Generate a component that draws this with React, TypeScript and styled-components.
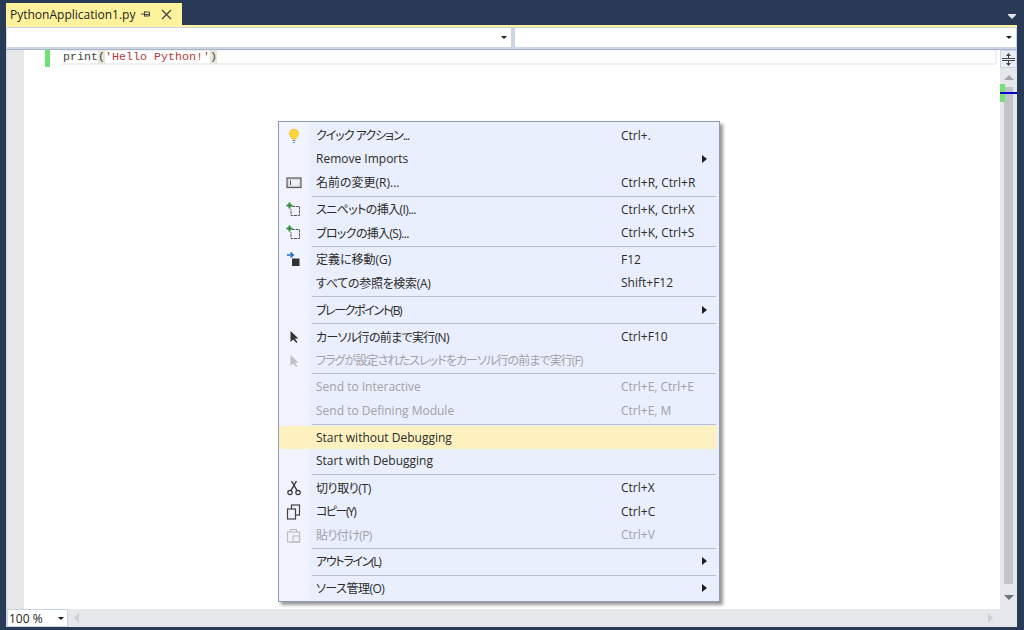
import React from 'react';
import styled, { createGlobalStyle } from 'styled-components';

const GlobalStyle = createGlobalStyle`
  html, body {
    margin: 0;
    padding: 0;
    background: #293a56;
  }
`;

const Window = styled.div`
  position: relative;
  width: 1024px;
  height: 630px;
  overflow: hidden;
  display: flex;
  flex-direction: column;
  background: #293a56;
  font-family: 'Open Sans', 'Noto Sans CJK JP', sans-serif;
`;

const TabStrip = styled.div`
  height: 25px;
  flex: none;
  display: flex;
  align-items: flex-end;
  justify-content: space-between;
  padding: 0 8px 0 6px;
`;

const Tab = styled.div`
  width: 176px;
  height: 22px;
  box-sizing: border-box;
  display: flex;
  align-items: center;
  padding-left: 4px;
  background: #fff29d;
  color: #1e1e1e;
  font-size: 12px;
`;

const TabTitle = styled.span`
  width: 135px;
  white-space: nowrap;
`;

const TabIcon = styled.svg`
  flex: none;
  margin-right: 10px;
`;

const Main = styled.div`
  flex: 1;
  display: flex;
  flex-direction: column;
  margin: 0 7px 3px 6px;
  border-top: 2px solid #fff29d;
  background: #ccd5e4;
`;

const NavBar = styled.div`
  height: 23px;
  flex: none;
  display: grid;
  grid-template-columns: 504px 1fr;
  gap: 4px;
  padding: 1px 1px 2px 1px;
  box-sizing: border-box;
  background: #ccd5e4;
  border-bottom: 1px solid #a9b5c9;
`;

const NavCombo = styled.div`
  background: #fff;
  display: flex;
  align-items: center;
  justify-content: flex-end;
  padding-right: 4px;
`;

const DownCaret = styled.span`
  width: 0;
  height: 0;
  border-left: 3px solid transparent;
  border-right: 3px solid transparent;
  border-top: 3px solid #1e1e1e;
`;

const EditorRow = styled.div`
  flex: 1;
  display: flex;
  min-height: 0;
  margin-left: 1px;
`;

const Margin = styled.div`
  width: 17px;
  flex: none;
  background: #e6e7e8;
`;

const Editor = styled.div`
  flex: 1;
  display: flex;
  align-items: flex-start;
  background: #fff;
  padding: 0 3px 0 21px;
`;

const ChangeBar = styled.span`
  width: 5px;
  height: 17px;
  flex: none;
  background: #6fe274;
  margin-right: 11px;
`;

const CurrentLine = styled.div`
  flex: 1;
  height: 15px;
  display: flex;
  align-items: center;
  box-sizing: border-box;
  padding-left: 2px;
  border: 1px solid #f0f0f0;
  border-width: 1px 2px 2px 0;
`;

const Code = styled.code`
  font-family: 'Liberation Mono', monospace;
  font-size: 11.67px;
  line-height: 15px;
  color: #444;
  white-space: pre;
  margin-top: 1px;
`;

const Brace = styled.span`
  background: #e4e8d8;
`;

const Str = styled.span`
  color: #b23a3a;
`;

const VScroll = styled.div`
  width: 17px;
  flex: none;
  background: #e6e7eb;
  display: flex;
  flex-direction: column;
  align-items: center;
`;

const Splitter = styled.div`
  width: 17px;
  height: 18px;
  flex: none;
  display: flex;
  align-items: center;
  justify-content: center;
  box-sizing: border-box;
  background: #e9eef9;
  border: 1px solid #ccd5e4;
`;

const UpArrow = styled.span`
  flex: none;
  margin-top: 7px;
  width: 0;
  height: 0;
  border-left: 5px solid transparent;
  border-right: 5px solid transparent;
  border-bottom: 5px solid #a3a6b0;
`;

const Thumb = styled.div`
  position: relative;
  width: 9px;
  flex: 1;
  margin-top: 7px;
  background: #c2c3c9;
`;

const OverviewGreen = styled.span`
  position: absolute;
  left: -4px;
  top: -3px;
  width: 5px;
  height: 18px;
  background: #6fe274;
`;

const OverviewBlue = styled.span`
  position: absolute;
  left: -4px;
  top: 5px;
  width: 17px;
  height: 2px;
  background: #0000cd;
`;

const DownArrow = styled.span`
  flex: none;
  margin: 11px 0 9px;
  width: 0;
  height: 0;
  border-left: 5px solid transparent;
  border-right: 5px solid transparent;
  border-top: 5px solid #6c7386;
`;

const BottomBar = styled.div`
  height: 18px;
  flex: none;
  display: flex;
  align-items: center;
  background: #e6e7eb;
  margin-left: 1px;
`;

const ZoomCombo = styled.div`
  width: 61px;
  height: 18px;
  flex: none;
  box-sizing: border-box;
  display: flex;
  align-items: center;
  justify-content: space-between;
  padding: 0 3px 0 1px;
  background: #fff;
  border: 1px solid #ccd5e4;
  font-family: 'Open Sans', sans-serif;
  font-size: 12px;
  color: #1e1e1e;
`;

const HScroll = styled.div`
  flex: 1;
  display: flex;
  align-items: center;
  justify-content: space-between;
  padding: 0 24px 0 6px;
`;

const LeftArrow = styled.span`
  width: 0;
  height: 0;
  border-top: 5px solid transparent;
  border-bottom: 5px solid transparent;
  border-right: 5px solid #ced0d6;
`;

const RightArrow = styled.span`
  width: 0;
  height: 0;
  border-top: 5px solid transparent;
  border-bottom: 5px solid transparent;
  border-left: 5px solid #ced0d6;
`;

/* context menu floats over the editor */
const Menu = styled.div`
  position: absolute;
  left: 278px;
  top: 121px;
  width: 442px;
  height: 481px;
  box-sizing: border-box;
  padding: 2px 0;
  background: linear-gradient(to right, #f1f4fe 30px, #e9effd 30px);
  border: 1px solid #8a9bb2;
  box-shadow: 3px 3px 3px rgba(70, 70, 70, 0.55);
  font-size: 12px;
  font-feature-settings: 'palt';
`;

const Row = styled.div<{ $disabled?: boolean; $active?: boolean }>`
  height: 23.5px;
  display: grid;
  grid-template-columns: 29px 313px 1fr 15px;
  align-items: center;
  margin: 0 2px 0 0;
  color: ${(p) => (p.$disabled ? '#a0a2a6' : '#2b2b2b')};
  background: ${(p) => (p.$active ? '#fdf2bf' : 'transparent')};
`;

const IconCell = styled.span`
  display: flex;
  justify-content: center;
  align-items: center;
  height: 100%;
`;

const Label = styled.span<{ $squeeze?: number }>`
  padding-left: 8px;
  margin-bottom: 1px;
  white-space: nowrap;
  letter-spacing: ${(p) => p.$squeeze ?? 0}px;
`;

const Shortcut = styled.span`
  margin-bottom: 1px;
  white-space: nowrap;
`;

const SubArrow = styled.span`
  width: 0;
  height: 0;
  border-top: 4px solid transparent;
  border-bottom: 4px solid transparent;
  border-left: 5px solid #1e1e1e;
  margin-bottom: 1px;
`;

const Separator = styled.div`
  height: 3.33px;
  margin: 0 3px 0 33px;
  display: flex;
  align-items: center;

  &::after {
    content: '';
    flex: 1;
    height: 1px;
    background: #b9bec8;
  }
`;

const Bulb = () => (
  <svg width="14" height="16" viewBox="0 0 14 16">
    <path d="M7 1a4.6 4.6 0 0 0-3 8c.7.7 1 1.3 1 2h4c0-.7.3-1.300 1-2a4.600 4.600 0 0 0-3-8z" fill="#fdd835" stroke="#e8b923" strokeWidth="0.6" />
    <path d="M5.500 12h3v1h-3zM6 14h2v1H6z" fill="#8a8a8a" />
  </svg>
);

const Rename = () => (
  <svg width="16" height="12" viewBox="0 0 16 12">
    <rect x="1" y="1" width="14" height="9.500" fill="#d4d6da" stroke="#5a5a5a" strokeWidth="1.200" />
    <rect x="3" y="3" width="10" height="5.500" fill="#eef0f6" />
    <path d="M4.500 3.500v4.500" stroke="#444" />
  </svg>
);

const Snippet = () => (
  <svg width="16" height="16" viewBox="0 0 16 16">
    <path d="M6 4.500h7.500v9H5V7" fill="none" stroke="#555" strokeDasharray="3 0.800" />
    <path d="M3.500 0.500v6M0.500 3.500h6" stroke="#2e8b3a" strokeWidth="2" />
  </svg>
);

const GoTo = () => (
  <svg width="16" height="16" viewBox="0 0 16 16">
    <rect x="6" y="6.500" width="7.500" height="7.500" fill="#333" />
    <path d="M1 3h6M4.500 0.500L7.200 3 4.500 5.500" fill="none" stroke="#1a6fc4" strokeWidth="1.500" />
  </svg>
);

const Pointer = ({ color }: { color: string }) => (
  <svg width="12" height="14" viewBox="0 0 12 14">
    <path d="M2.500 1v11l2.800-2.600 3 3.600 1-.900-2.400-3.600H10.500z" fill={color} />
  </svg>
);

const Scissors = () => (
  <svg width="16" height="16" viewBox="0 0 16 16" fill="none" stroke="#333" strokeWidth="1.200">
    <circle cx="4" cy="12.500" r="2.200" />
    <circle cx="12" cy="12.500" r="2.200" />
    <path d="M5 10.500L10.500 1M11 10.500L5.500 1" strokeWidth="1.400" />
  </svg>
);

const Copy = () => (
  <svg width="15" height="16" viewBox="0 0 15 16" fill="none" stroke="#444" strokeWidth="1.200">
    <rect x="5.500" y="1" width="8" height="10" />
    <rect x="1.500" y="5" width="8" height="10" fill="#eef1fd" />
  </svg>
);

const Paste = () => (
  <svg width="15" height="16" viewBox="0 0 15 16" fill="none" stroke="#bcbec4" strokeWidth="1.200">
    <rect x="1.500" y="5" width="12" height="10" />
    <path d="M4.500 5V2.500h6V5" />
    <rect x="7" y="9" width="6.500" height="6" />
  </svg>
);

type Item = {
  icon?: React.ReactNode;
  label: string;
  squeeze?: number;
  shortcut?: string;
  sub?: boolean;
  disabled?: boolean;
  active?: boolean;
};

const groups: Item[][] = [
  [
    { icon: <Bulb />, label: 'クイック アクション...', squeeze: -1, shortcut: 'Ctrl+.' },
    { label: 'Remove Imports', sub: true },
    { icon: <Rename />, label: '名前の変更(R)...', shortcut: 'Ctrl+R, Ctrl+R' },
  ],
  [
    { icon: <Snippet />, label: 'スニペットの挿入(I)...', squeeze: -0.6, shortcut: 'Ctrl+K, Ctrl+X' },
    { icon: <Snippet />, label: 'ブロックの挿入(S)...', squeeze: -0.65, shortcut: 'Ctrl+K, Ctrl+S' },
  ],
  [
    { icon: <GoTo />, label: '定義に移動(G)', shortcut: 'F12' },
    { label: 'すべての参照を検索(A)', squeeze: -0.3, shortcut: 'Shift+F12' },
  ],
  [{ label: 'ブレークポイント(B)', squeeze: -1.4, sub: true }],
  [
    { icon: <Pointer color="#333" />, label: 'カーソル行の前まで実行(N)', squeeze: -0.65, shortcut: 'Ctrl+F10' },
    { icon: <Pointer color="#bfc1c6" />, label: 'フラグが設定されたスレッドをカーソル行の前まで実行(F)', squeeze: -0.9, disabled: true },
  ],
  [
    { label: 'Send to Interactive', shortcut: 'Ctrl+E, Ctrl+E', disabled: true },
    { label: 'Send to Defining Module', shortcut: 'Ctrl+E, M', disabled: true },
  ],
  [
    { label: 'Start without Debugging', active: true },
    { label: 'Start with Debugging' },
  ],
  [
    { icon: <Scissors />, label: '切り取り(T)', squeeze: -0.4, shortcut: 'Ctrl+X' },
    { icon: <Copy />, label: 'コピー(Y)', squeeze: -1.5, shortcut: 'Ctrl+C' },
    { icon: <Paste />, label: '貼り付け(P)', squeeze: -0.6, shortcut: 'Ctrl+V', disabled: true },
  ],
  [{ label: 'アウトライン(L)', squeeze: -1.3, sub: true }],
  [{ label: 'ソース管理(O)', squeeze: -0.5, sub: true }],
];

export default function App() {
  return (
    <Window>
      <GlobalStyle />
      <TabStrip>
        <Tab>
          <TabTitle>PythonApplication1.py</TabTitle>
          <TabIcon width="10" height="10" viewBox="0 0 10 10" fill="none" stroke="#444">
            <path d="M0 5h3M3.500 2.500v5M3.500 3h5v4h-5M3.500 5.500h5" />
          </TabIcon>
          <TabIcon width="11" height="11" viewBox="0 0 11 11" fill="none" stroke="#444" strokeWidth="1.300">
            <path d="M1 1l9 9M10 1l-9 9" />
          </TabIcon>
        </Tab>
        <svg width="8" height="5" viewBox="0 0 8 5" style={{ marginBottom: 6 }}>
          <path d="M0 0h8v1H0zM0 1h8L4 5z" fill="#dfe3ea" />
        </svg>
      </TabStrip>
      <Main>
        <NavBar>
          <NavCombo>
            <DownCaret />
          </NavCombo>
          <NavCombo>
            <DownCaret />
          </NavCombo>
        </NavBar>
        <EditorRow>
          <Margin />
          <Editor>
            <ChangeBar />
            <CurrentLine>
              <Code>
                print<Brace>(</Brace>
                <Str>'Hello Python!'</Str>
                <Brace>)</Brace>
              </Code>
            </CurrentLine>
          </Editor>
          <VScroll>
            <Splitter>
              <svg width="13" height="13" viewBox="0 0 13 13" fill="#444">
                <path d="M0 5h13v1H0zM0 7h13v1H0zM6.500 0L9 3H4zM6.500 13L4 10h5zM6 2h1v3H6zM6 8h1v3H6z" />
              </svg>
            </Splitter>
            <UpArrow />
            <Thumb>
              <OverviewGreen />
              <OverviewBlue />
            </Thumb>
            <DownArrow />
          </VScroll>
        </EditorRow>
        <BottomBar>
          <ZoomCombo>
            100 %
            <DownCaret />
          </ZoomCombo>
          <HScroll>
            <LeftArrow />
            <RightArrow />
          </HScroll>
        </BottomBar>
      </Main>
      <Menu>
        {groups.map((group, g) => (
          <React.Fragment key={g}>
            {g > 0 && <Separator />}
            {group.map((item) => (
              <Row key={item.label} $disabled={item.disabled} $active={item.active}>
                <IconCell>{item.icon}</IconCell>
                <Label $squeeze={item.squeeze}>{item.label}</Label>
                <Shortcut>{item.shortcut}</Shortcut>
                {item.sub ? <SubArrow /> : <span />}
              </Row>
            ))}
          </React.Fragment>
        ))}
      </Menu>
    </Window>
  );
}
